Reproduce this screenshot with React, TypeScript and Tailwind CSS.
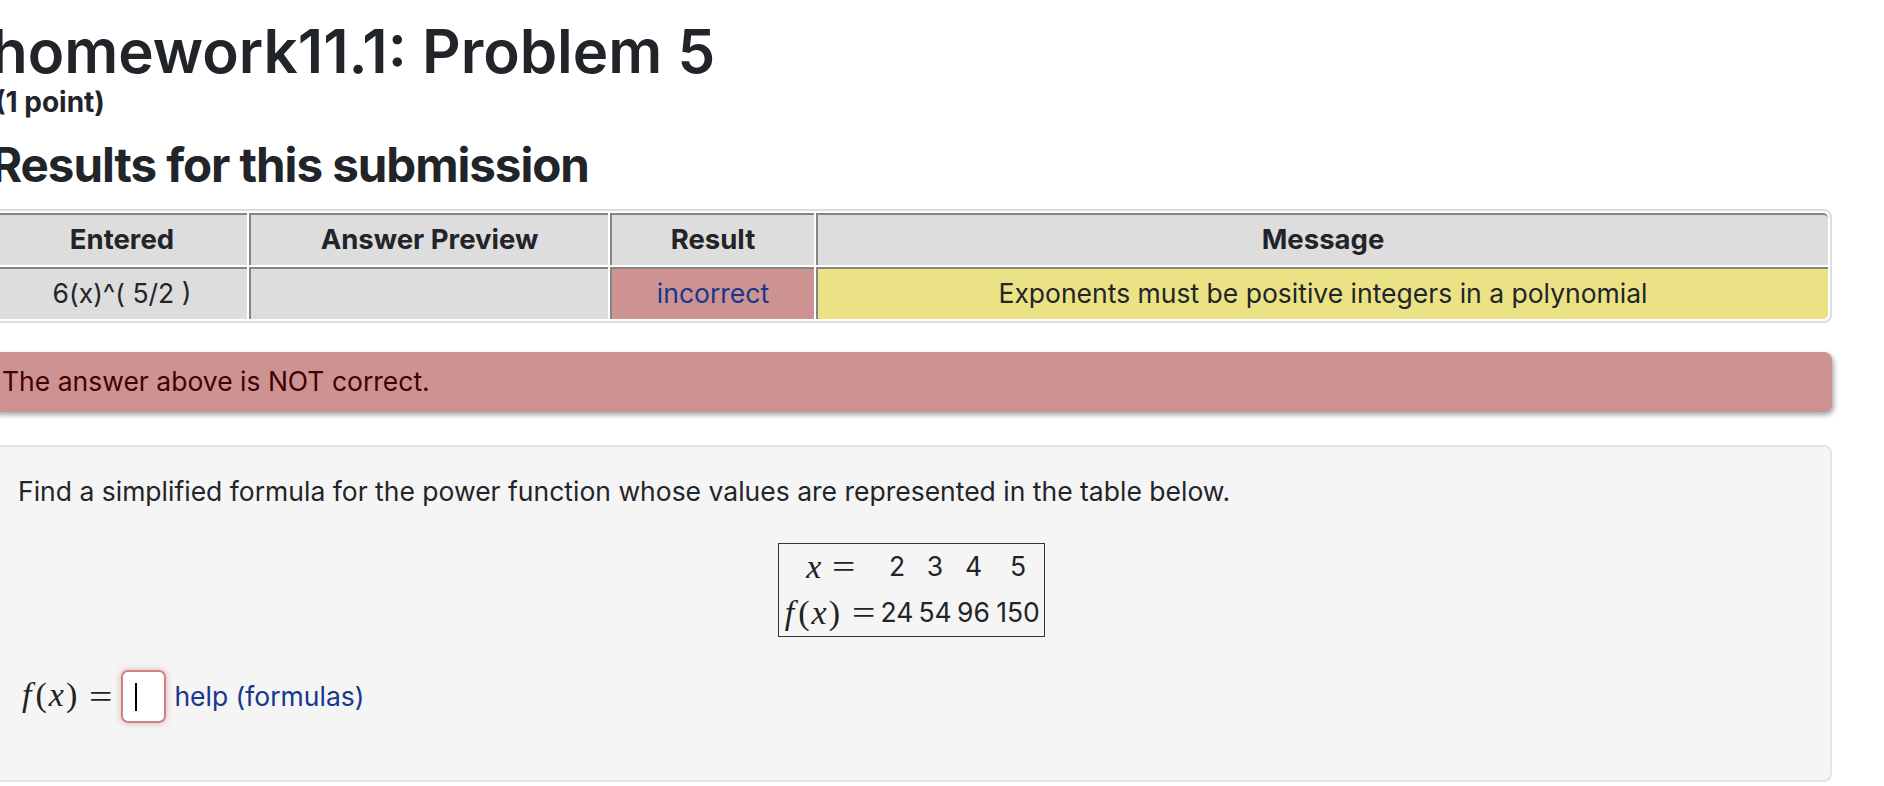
import React from "react"

// Submission results + problem panel, WeBWorK style.
const cols = [
  { key: "entered", title: "Entered", width: "w-[252px]" },
  { key: "preview", title: "Answer Preview", width: "w-[359px]" },
  { key: "result", title: "Result", width: "w-[204px]" },
  { key: "message", title: "Message", width: "" },
]

const cell = "border-t-2 border-l-2 border-[#858585] text-center align-middle h-[52px] px-2"
const serif = "font-['Liberation_Serif',serif] text-[34px] leading-none text-[#222]"

function Fx() {
  return (
    <span className={serif}>
      <i className="mr-[4px]">f</i>(<i className="mx-[2px]">x</i>)
    </span>
  )
}

function Eq({ className = "" }: { className?: string }) {
  return <span className={`${serif} inline-block scale-x-[1.22] ${className}`}>=</span>
}

const xs = ["2", "3", "4", "5"]
const fs = ["24", "54", "96", "150"]

export default function App() {
  return (
    <div className="min-h-screen w-full overflow-hidden bg-white font-['Inter',sans-serif] text-[#212529]">
      <div className="ml-[-9px] w-[1842px]">
        <h1 className="pt-[15px] text-[60px] font-semibold leading-[72px]">homework11.1: Problem 5</h1>
        <div className="pl-[4px] text-[28px] font-bold leading-[30px]">(1 point)</div>
        <h2 className="mt-[19px] text-[47.5px] font-bold leading-[58px] tracking-[-0.022em]">Results for this submission</h2>

        {/* results table */}
        <div className="mt-[15px] w-[1841px] overflow-hidden rounded-[8px] border-2 border-[#dedede]">
          <table className="w-full table-fixed border-separate border-spacing-[2px] text-[26.5px]">
            <thead>
              <tr>
                {cols.map((c, i) => (
                  <th
                    key={c.key}
                    className={`${cell} ${c.width} bg-[#dddddd] text-[27.5px] font-bold ${i === cols.length - 1 ? "rounded-tr-[5px]" : ""}`}
                  >
                    {c.title}
                  </th>
                ))}
              </tr>
            </thead>
            <tbody>
              <tr>
                <td className={`${cell} bg-[#dddddd]`}>6(x)^( 5/2 )</td>
                <td className={`${cell} bg-[#dddddd]`}></td>
                <td className={`${cell} bg-[#cd9393] text-[#17378a]`}>incorrect</td>
                <td className={`${cell} rounded-br-[5px] bg-[#ebe285]`}>Exponents must be positive integers in a polynomial</td>
              </tr>
            </tbody>
          </table>
        </div>

        {/* status alert */}
        <div className="mt-[29px] flex h-[60px] w-[1841px] items-center rounded-[8px] bg-[#cd9393] pl-[11px] text-[26.5px] text-[#400] shadow-[2px_3px_5px_rgba(0,0,0,0.35)]">
          The answer above is NOT correct.
        </div>

        {/* problem body */}
        <div className="mt-[33px] w-[1841px] rounded-[8px] border-2 border-[#e4e4e4] bg-[#f5f5f5] px-[25px] pb-[57px] pt-[26px] text-[26.5px]">
          <p className="leading-[36px]">Find a simplified formula for the power function whose values are represented in the table below.</p>

          <div className="mt-[34px] flex justify-center">
            <div className="grid grid-cols-[92px_30px_32px_31px_44px] grid-rows-[46px_46px] gap-x-[7px] border border-[#333] px-[4px]">
              <div className="flex items-center justify-center gap-[13px] pl-[2px]">
                <i className={serif}>x</i>
                <Eq />
              </div>
              {xs.map((v) => (
                <div key={v} className="flex items-center justify-center">{v}</div>
              ))}
              <div className="flex items-center justify-center gap-[14px]">
                <Fx />
                <Eq />
              </div>
              {fs.map((v) => (
                <div key={v} className="flex items-center justify-center">{v}</div>
              ))}
            </div>
          </div>

          <div className="mt-[33px] flex h-[53px] items-center">
            <span className="ml-[4px]"><Fx /></span>
            <Eq className="ml-[14px]" />
            <div className="ml-[11px] flex h-[53px] w-[45px] items-center rounded-[7px] border-2 border-[#c98585] bg-white pl-[12px] shadow-[0_0_6px_rgba(200,110,110,0.55)]">
              <span className="h-[28px] w-[2px] bg-black" />
            </div>
            <span className="ml-[8px] text-[#17378a]">help (formulas)</span>
          </div>
        </div>
      </div>
    </div>
  )
}
